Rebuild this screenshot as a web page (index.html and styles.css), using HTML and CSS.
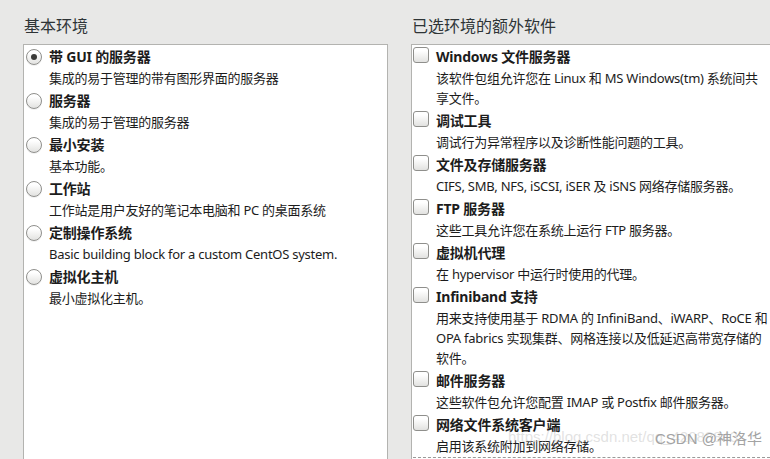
FILE: index.html
```html
<!DOCTYPE html>
<html lang="zh-CN">
<head>
    <meta charset="UTF-8">
    <meta name="viewport" content="width=device-width, initial-scale=1.0">
    <title>软件选择</title>
    <link rel="stylesheet" href="styles.css">
</head>
<body>

    <div class="page">
        <div class="column left">
            <div class="heading">基本环境</div>
            <div class="panel">
                <div class="item">
                    <span class="radio checked"></span>
                    <div class="text">
                        <div class="title">带 GUI 的服务器</div>
                        <div class="desc">集成的易于管理的带有图形界面的服务器</div>
                    </div>
                </div>
                <div class="item">
                    <span class="radio"></span>
                    <div class="text">
                        <div class="title">服务器</div>
                        <div class="desc">集成的易于管理的服务器</div>
                    </div>
                </div>
                <div class="item">
                    <span class="radio"></span>
                    <div class="text">
                        <div class="title">最小安装</div>
                        <div class="desc">基本功能。</div>
                    </div>
                </div>
                <div class="item">
                    <span class="radio"></span>
                    <div class="text">
                        <div class="title">工作站</div>
                        <div class="desc">工作站是用户友好的笔记本电脑和 PC 的桌面系统</div>
                    </div>
                </div>
                <div class="item">
                    <span class="radio"></span>
                    <div class="text">
                        <div class="title">定制操作系统</div>
                        <div class="desc">Basic building block for a custom CentOS system.</div>
                    </div>
                </div>
                <div class="item">
                    <span class="radio"></span>
                    <div class="text">
                        <div class="title">虚拟化主机</div>
                        <div class="desc">最小虚拟化主机。</div>
                    </div>
                </div>
            </div>
        </div>

        <div class="column right">
            <div class="heading">已选环境的额外软件</div>
            <div class="panel">
                <div class="item">
                    <span class="check"></span>
                    <div class="text">
                        <div class="title">Windows 文件服务器</div>
                        <div class="desc">该软件包组允许您在 Linux 和 MS Windows(tm) 系统间共<br>享文件。</div>
                    </div>
                </div>
                <div class="item">
                    <span class="check"></span>
                    <div class="text">
                        <div class="title">调试工具</div>
                        <div class="desc">调试行为异常程序以及诊断性能问题的工具。</div>
                    </div>
                </div>
                <div class="item">
                    <span class="check"></span>
                    <div class="text">
                        <div class="title">文件及存储服务器</div>
                        <div class="desc">CIFS, SMB, NFS, iSCSI, iSER 及 iSNS 网络存储服务器。</div>
                    </div>
                </div>
                <div class="item">
                    <span class="check"></span>
                    <div class="text">
                        <div class="title">FTP 服务器</div>
                        <div class="desc">这些工具允许您在系统上运行 FTP 服务器。</div>
                    </div>
                </div>
                <div class="item">
                    <span class="check"></span>
                    <div class="text">
                        <div class="title">虚拟机代理</div>
                        <div class="desc">在 hypervisor 中运行时使用的代理。</div>
                    </div>
                </div>
                <div class="item">
                    <span class="check"></span>
                    <div class="text">
                        <div class="title">Infiniband 支持</div>
                        <div class="desc">用来支持使用基于 RDMA 的 InfiniBand、iWARP、RoCE 和<br>OPA fabrics 实现集群、网格连接以及低延迟高带宽存储的<br>软件。</div>
                    </div>
                </div>
                <div class="item">
                    <span class="check"></span>
                    <div class="text">
                        <div class="title">邮件服务器</div>
                        <div class="desc">这些软件包允许您配置 IMAP 或 Postfix 邮件服务器。</div>
                    </div>
                </div>
                <div class="item">
                    <span class="check"></span>
                    <div class="text">
                        <div class="title">网络文件系统客户端</div>
                        <div class="desc">启用该系统附加到网络存储。</div>
                    </div>
                </div>
                <!-- focus ring of the next (off-screen) row -->
                <div class="focus"></div>
            </div>
        </div>
    </div>

    <div class="watermark">https://blog.csdn.net/qq_42088843</div>
    <div class="csdn">CSDN @神洛华</div>

</body>
</html>
```

FILE: styles.css
```css
html, body {
    margin: 0;
    height: 100%;
    overflow: hidden;
}
body {
    background-color: #e8e8e7;
    font-family: "Noto Sans", "Noto Sans CJK SC", sans-serif;
    color: #1c1c1c;
    position: relative;
}
.page {
    display: flex;
    gap: 23px;
    padding: 16px 0 0 23px;
}
.column {
    flex: 0 0 365px;
}
.heading {
    font-size: 16px;
    line-height: 20px;
    height: 20px;
    margin-bottom: 8px;
    color: #2e3436;
    padding-left: 1px;
}
.panel {
    background-color: #ffffff;
    border: 1px solid #b3b3b0;
    height: 560px;
    padding: 1px 0 0 2px;
}
.right .panel {
    padding-left: 1px;
}
.item {
    display: flex;
    margin-bottom: 2px;
}
.text {
    flex: 1;
}
.title {
    font-size: 14px;
    font-weight: bold;
    line-height: 22px;
    letter-spacing: -0.2px;
}
.desc {
    font-size: 13px;
    line-height: 20px;
    letter-spacing: -0.25px;
    white-space: nowrap;
}
.radio {
    flex: 0 0 auto;
    width: 14px;
    height: 14px;
    margin: 3px 7px 0 0;
    border: 1px solid #8f8f8c;
    border-radius: 50%;
    background-image: linear-gradient(to bottom, #ffffff 20%, #e2e2e0);
    box-shadow: 0 1px 0 rgba(0, 0, 0, 0.06);
    position: relative;
}
.radio.checked::after {
    content: "";
    position: absolute;
    left: 4px;
    top: 4px;
    width: 6px;
    height: 6px;
    border-radius: 50%;
    background-color: #3a3a38;
}
.check {
    flex: 0 0 auto;
    width: 14px;
    height: 14px;
    margin: 1px 7px 0 0;
    border: 1px solid #8f8f8c;
    border-radius: 3px;
    background-image: linear-gradient(to bottom, #ffffff 20%, #e2e2e0);
}
.focus {
    border-top: 1px dashed #9a9a98;
    margin-top: -1px;
    height: 40px;
}
.watermark {
    position: absolute;
    left: 508px;
    top: 428px;
    font-family: "Liberation Sans", sans-serif;
    font-size: 15px;
    color: rgba(190, 190, 190, 0.45);
    white-space: nowrap;
}
.csdn {
    position: absolute;
    left: 655px;
    top: 427px;
    font-family: "Liberation Sans", "Noto Sans CJK SC", sans-serif;
    font-size: 15px;
    color: #a3a3a3;
    white-space: nowrap;
}
```
